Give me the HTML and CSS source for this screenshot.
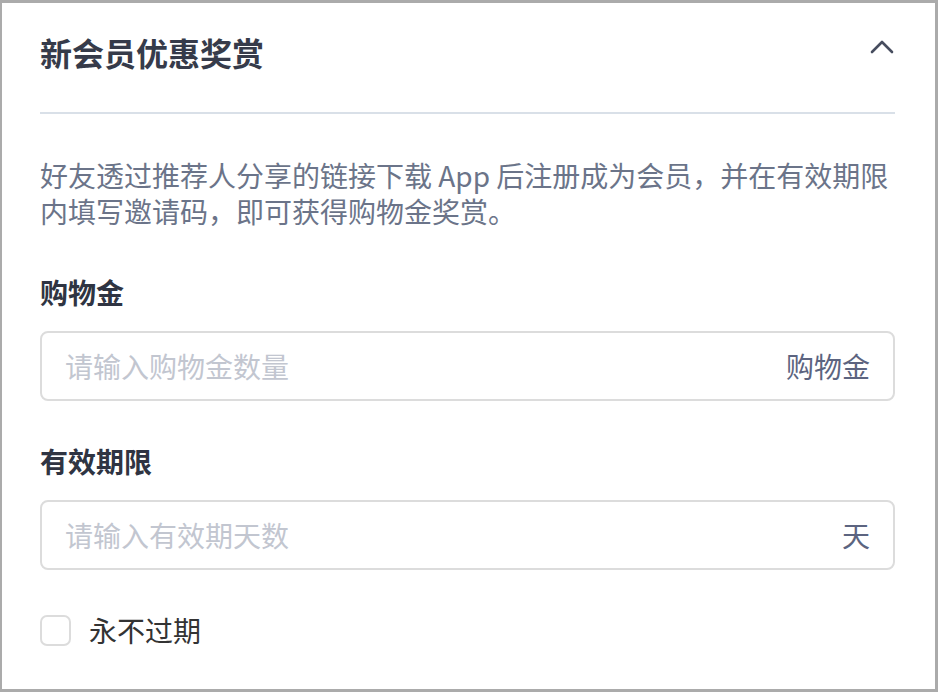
FILE: index.html
```html
<!DOCTYPE html>
<html lang="zh-CN">
<head>
  <meta charset="UTF-8">
  <meta name="viewport" content="width=device-width, initial-scale=1.0">
  <title>新会员优惠奖赏</title>
  <link rel="stylesheet" href="styles.css">
</head>
<body>
  <section class="panel">
    <div class="panel-header">
      <h2>新会员优惠奖赏</h2>
      <button type="button" class="toggle" aria-label="收起">
        <svg width="24" height="14" viewBox="0 0 24 14">
          <path d="M2 12 L12 2 L22 12" fill="none" stroke="#474d5f" stroke-width="2.6" stroke-linecap="round" stroke-linejoin="round"/>
        </svg>
      </button>
    </div>
    <p class="desc">好友透过推荐人分享的链接下载 App 后注册成为会员，并在有效期限内填写邀请码，即可获得购物金奖赏。</p>

    <label class="field-label" for="credit">购物金</label>
    <div class="field">
      <input type="text" id="credit" placeholder="请输入购物金数量">
      <span class="suffix">购物金</span>
    </div>

    <label class="field-label" for="days">有效期限</label>
    <div class="field">
      <input type="text" id="days" placeholder="请输入有效期天数">
      <span class="suffix">天</span>
    </div>

    <label class="check">
      <input type="checkbox">
      <span class="box"></span>
      <span>永不过期</span>
    </label>
  </section>
</body>
</html>
```

FILE: styles.css
```css
body {
  margin: 0;
  padding: 3px 3px 3px 2px;
  background-color: #ababab;
  font-family: "Noto Sans CJK SC", "Noto Sans", sans-serif;
}
.panel {
  background-color: #fff;
  height: 686px;
  box-sizing: border-box;
  padding: 0 40px 0 38px;
}
.panel-header {
  display: flex;
  justify-content: space-between;
  align-items: center;
  padding: 29px 0 40px;
  border-bottom: 2px solid #d9e0e8;
}
.panel-header h2 {
  margin: 0;
  font-size: 32px;
  line-height: 40px;
  font-weight: 600;
  color: #363b4a;
}
.toggle {
  border: none;
  background: none;
  padding: 0;
  margin-right: 1px;
  margin-top: -10px;
  cursor: pointer;
}
.toggle svg {
  display: block;
}
.desc {
  margin: 43px 0 0;
  font-size: 28px;
  line-height: 36px;
  color: #6b7489;
}
.field-label {
  display: block;
  margin-top: 45px;
  font-size: 28px;
  line-height: 36px;
  font-weight: 700;
  color: #2f3442;
}
.field + .field-label {
  margin-top: 42px;
}
.field {
  display: flex;
  align-items: center;
  margin-top: 21px;
  height: 70px;
  box-sizing: border-box;
  border: 2px solid #dcdcdc;
  border-radius: 8px;
  padding: 0 23px;
}
.field input {
  flex: 1;
  border: none;
  outline: none;
  padding: 0;
  font-family: inherit;
  font-size: 28px;
  color: #333;
  background: transparent;
}
.field input::placeholder {
  color: #c2c6d0;
}
.suffix {
  font-size: 28px;
  color: #5c6480;
}
.check {
  display: flex;
  align-items: center;
  gap: 18px;
  margin-top: 40px;
  font-size: 28px;
  color: #333;
  cursor: pointer;
}
.check input {
  display: none;
}
.check .box {
  width: 31px;
  height: 31px;
  box-sizing: border-box;
  border: 2px solid #dcdcdc;
  border-radius: 7px;
}
```
